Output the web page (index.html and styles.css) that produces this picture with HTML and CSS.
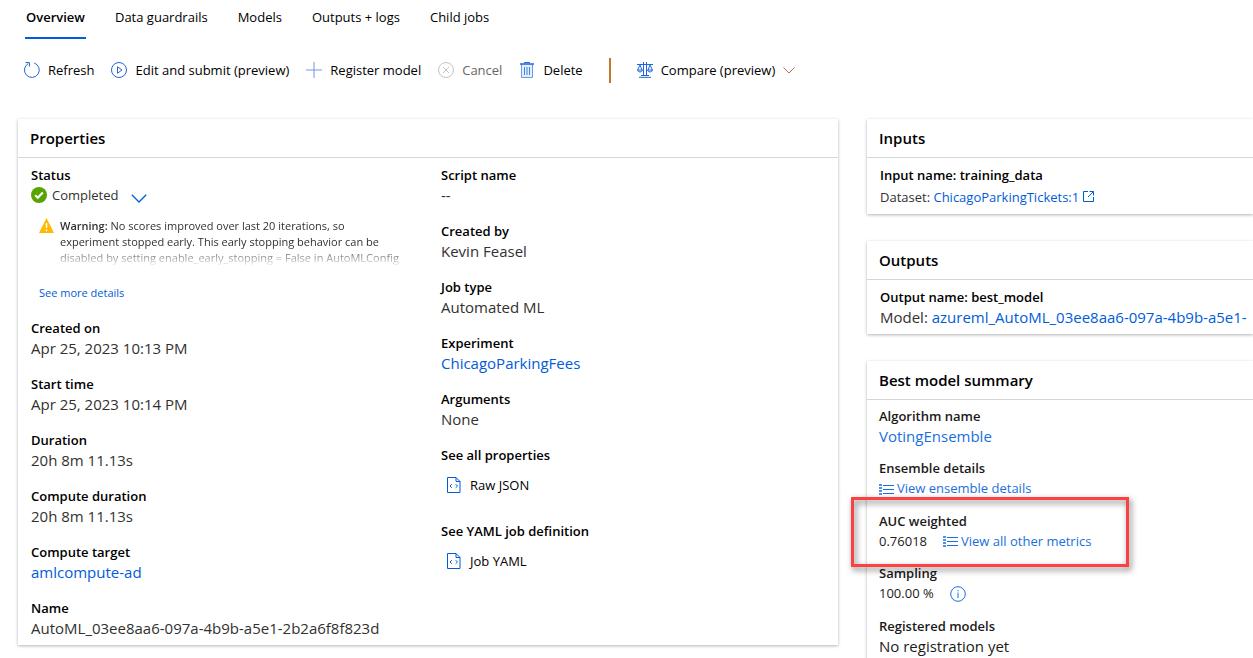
FILE: index.html
```html
<!DOCTYPE html>
<html lang="en">
<head>
<meta charset="utf-8">
<meta name="viewport" content="width=device-width, initial-scale=1">
<title>Automated ML job overview</title>
<link rel="stylesheet" href="styles.css">
</head>
<body>
<svg class="sprite" aria-hidden="true">
  <symbol id="i-list" viewBox="0 0 15 12">
    <path d="M0 2h3M0 5h3M0 8h3M0 11h3" stroke="currentColor" stroke-width="1.500" fill="none"/>
    <path d="M4 2.500h11M4 6.500h11M4 10.500h11" stroke="currentColor" fill="none"/>
  </symbol>
  <symbol id="i-code" viewBox="0 0 14 16">
    <path d="M.5.5h8.500l4 4v11H.5zM9 .5v4h4" fill="none" stroke="currentColor"/>
    <path d="M4.800 7.200 3 9l1.800 1.800M8.700 7.200 10.500 9l-1.800 1.800" fill="none" stroke="currentColor"/>
  </symbol>
</svg>
<nav class="tabs">
  <a class="tab active" href="#overview" aria-current="page">Overview</a>
  <a class="tab" href="#guardrails">Data guardrails</a>
  <a class="tab" href="#models">Models</a>
  <a class="tab" href="#outputs">Outputs + logs</a>
  <a class="tab" href="#children">Child jobs</a>
</nav>
<div class="toolbar">
  <button class="tool" type="button">
    <svg width="16" height="16" viewBox="0 0 16 16" fill="none" stroke="currentColor"><path d="M4.200 1.600A7.400 7.400 0 1 0 10.200 1M1.500.6h3.900v4"/></svg>Refresh</button>
  <button class="tool" type="button">
    <svg width="16" height="16" viewBox="0 0 16 16" fill="none" stroke="currentColor"><circle cx="8" cy="8" r="7.500"/><path d="M6.500 4.800v6.400L11 8z"/></svg>Edit and submit (preview)</button>
  <button class="tool" type="button">
    <svg class="soft" width="16" height="16" viewBox="0 0 16 16" fill="none" stroke="currentColor"><path d="M8 0v16M0 8h16"/></svg>Register model</button>
  <button class="tool" type="button" disabled>
    <svg width="16" height="16" viewBox="0 0 16 16" fill="none" stroke="currentColor"><circle cx="8" cy="8" r="7.500"/><path d="m5 5 6 6M11 5l-6 6"/></svg>Cancel</button>
  <button class="tool" type="button">
    <svg width="16" height="16" viewBox="0 0 16 16" fill="none" stroke="currentColor"><path d="M2.500 2v13.500h11V2" stroke="#6f97e8" fill="#e3effc"/><path d="M1 2h14" stroke-width="1.500"/><path d="M5.500 1.500v-1h5v1"/><path d="M5.500 5v8M8 5v8M10.500 5v8" stroke="#3f86e0"/></svg>Delete</button>
  <span class="divider"></span>
  <button class="tool" type="button">
    <svg width="16" height="16" viewBox="0 0 16 16" fill="none" stroke="currentColor"><path d="M0 2.500h16M6.500 0v14M9.500 0v14M2 15.300h12M4 13.500h8M3 3 .6 8M3 3l2 5M13 3l-2 5M13 3l2.400 5M.5 8h5q-.5 2-2.500 2T.5 8zM10.500 8h5q-.5 2-2.500 2t-2.500-2z"/></svg>Compare (preview)
    <svg class="caret" width="12" height="7" viewBox="0 0 12 7" fill="none" stroke="currentColor"><path d="m.5.5 5.500 5.500L11.500.5"/></svg></button>
</div>
<main class="layout">
  <section class="card">
    <h2>Properties</h2>
    <div class="card-body columns">
      <dl class="fields">
        <div class="field">
          <dt>Status</dt>
          <dd class="status">
            <svg width="16" height="16" viewBox="0 0 16 16"><circle cx="8" cy="8" r="8" fill="#57a300"/><path d="m4.200 8.200 2.600 2.600 5-5.300" fill="none" stroke="#fff" stroke-width="2"/></svg>
            <span>Completed</span>
            <button class="expand" type="button" aria-label="Toggle status details"><svg width="16" height="9" viewBox="0 0 16 9" fill="none" stroke="currentColor" stroke-width="1.300"><path d="m.8.8 7.200 7.200L15.200.8"/></svg></button>
          </dd>
          <dd class="notice">
            <svg width="15" height="15" viewBox="0 0 15 15"><path d="M7.500 0 15 15H0z" fill="#ffb900"/><path d="M7.500 5v5M7.500 11.500v1.700" stroke="#fff" stroke-width="1.500"/></svg>
            <p><strong>Warning:</strong> No scores improved over last 20 iterations, so<br>experiment stopped early. This early stopping behavior can be disabled by setting enable_early_stopping = False in AutoMLConfig</p>
          </dd>
          <dd class="more"><a href="#details">See more details</a></dd>
        </div>
        <div class="field"><dt>Created on</dt><dd>Apr 25, 2023 10:13 PM</dd></div>
        <div class="field"><dt>Start time</dt><dd>Apr 25, 2023 10:14 PM</dd></div>
        <div class="field"><dt>Duration</dt><dd>20h 8m 11.13s</dd></div>
        <div class="field"><dt>Compute duration</dt><dd>20h 8m 11.13s</dd></div>
        <div class="field"><dt>Compute target</dt><dd><a href="#compute">amlcompute-ad</a></dd></div>
        <div class="field"><dt>Name</dt><dd>AutoML_03ee8aa6-097a-4b9b-a5e1-2b2a6f8f823d</dd></div>
      </dl>
      <dl class="fields">
        <div class="field"><dt>Script name</dt><dd>--</dd></div>
        <div class="field"><dt>Created by</dt><dd>Kevin Feasel</dd></div>
        <div class="field"><dt>Job type</dt><dd>Automated ML</dd></div>
        <div class="field"><dt>Experiment</dt><dd><a href="#experiment">ChicagoParkingFees</a></dd></div>
        <div class="field"><dt>Arguments</dt><dd>None</dd></div>
        <div class="field"><dt>See all properties</dt><dd><button class="file" type="button"><svg width="14" height="16"><use href="#i-code"/></svg>Raw JSON</button></dd></div>
        <div class="field"><dt>See YAML job definition</dt><dd><button class="file" type="button"><svg width="14" height="16"><use href="#i-code"/></svg>Job YAML</button></dd></div>
      </dl>
    </div>
  </section>
  <div class="side">
    <section class="card">
      <h2>Inputs</h2>
      <dl class="card-body">
        <dt>Input name: training_data</dt>
        <dd class="small dataset">Dataset: <a href="#dataset">ChicagoParkingTickets:1 <svg width="11" height="11" viewBox="0 0 11 11" fill="none" stroke="currentColor"><path d="M5 .5H.5v10h10V6M6.500.5h4v4M10.500.5 5 6"/></svg></a></dd>
      </dl>
    </section>
    <section class="card">
      <h2>Outputs</h2>
      <dl class="card-body">
        <dt>Output name: best_model</dt>
        <dd class="clip">Model: <a href="#model">azureml_AutoML_03ee8aa6-097a-4b9b-a5e1-</a></dd>
      </dl>
    </section>
    <section class="card">
      <h2>Best model summary</h2>
      <dl class="card-body summary">
        <div class="field"><dt>Algorithm name</dt><dd><a href="#ensemble">VotingEnsemble</a></dd></div>
        <div class="field"><dt>Ensemble details</dt><dd class="small inline tall"><a class="list-link" href="#ensemble-details"><svg width="15" height="12"><use href="#i-list"/></svg>View ensemble details</a></dd></div>
        <div class="field highlighted"><dt>AUC weighted</dt><dd class="small inline">0.76018 <a class="list-link" href="#metrics"><svg width="15" height="12"><use href="#i-list"/></svg>View all other metrics</a></dd></div>
        <div class="field"><dt>Sampling</dt><dd class="small inline tall">100.00 % <button class="info" type="button" aria-label="Sampling information"><svg width="16" height="16" viewBox="0 0 16 16" fill="none" stroke="currentColor"><circle cx="8" cy="8" r="7.300"/><path d="M8 6.500V12M8 4v1.300"/></svg></button></dd></div>
        <div class="field"><dt>Registered models</dt><dd>No registration yet</dd></div>
      </dl>
    </section>
  </div>
</main>
</body>
</html>
```
FILE: styles.css
```css
*, *::after { box-sizing: border-box; }
body {
  margin: 0;
  background: #fff;
  color: #000;
  font: 13px/20px "Open Sans", "Noto Sans", sans-serif;
}
button {
  font: inherit;
  color: inherit;
  background: none;
  border: 0;
  padding: 0;
  cursor: pointer;
}
a { color: #015cda; text-decoration: none; }
h2, dl, dd, p { margin: 0; }
svg { flex: none; }
.sprite { display: none; }

.tabs { display: flex; gap: 28px; padding-left: 25px; }
.tab { color: #000; padding: 7px 1px 10px; border-bottom: 2px solid transparent; }
.tab.active { font-weight: 600; border-color: #015cda; }

.toolbar { display: flex; align-items: center; gap: 17px; height: 32px; margin-top: 15px; padding-left: 24px; }
.tool { display: flex; align-items: center; gap: 8px; white-space: nowrap; }
.tool svg { color: #2264d9; }
.tool .soft { color: #7b93de; }
.tool:disabled { color: #666; }
.tool:disabled svg { color: #c3c3c3; }
.tool .caret { color: #b4705c; }
.divider { width: 2px; height: 25px; margin: 0 9px; background: #c07a2c; }

.layout {
  display: grid;
  grid-template-columns: minmax(0, 820fr) minmax(0, 386fr);
  gap: 29px;
  align-items: start;
  margin-top: 33px;
  padding-left: 18px;
}
.side { display: grid; gap: 27px; }
.card { min-width: 0; background: #fff; box-shadow: 0 1px 3px rgba(0, 0, 0, .3); }
.card h2 { padding: 9px 12px; border-bottom: 1px solid #d6d6d6; font-size: 15px; line-height: 20px; font-weight: 600; }
.card-body { padding: 7px 13px; }
.columns { display: grid; grid-template-columns: 1fr 1fr; gap: 26px; }
.fields { display: grid; gap: 16px; align-content: start; min-width: 0; }
dt { font-weight: 600; }
dd { font-size: 15px; color: #323130; }
dd.small { font-size: 13px; }
.dataset { padding-top: 2px; }
.clip { white-space: nowrap; overflow: hidden; margin-right: -13px; }

.status { display: flex; align-items: center; gap: 5px; font-size: 13px; }
.expand { display: flex; margin: 6px 0 0 8px; color: #015cda; }
.notice {
  display: flex;
  gap: 6px;
  padding: 13px 0 0 8px;
  font-size: 11px;
  line-height: 16px;
  -webkit-mask-image: linear-gradient(#000 42px, transparent 62px);
  mask-image: linear-gradient(#000 42px, transparent 62px);
}
.notice strong { font-weight: 600; }
.more { padding: 18px 0 0 8px; font-size: 11px; line-height: 18px; }
.file { display: flex; align-items: center; gap: 9px; height: 40px; padding-left: 6px; font-size: 13px; color: #000; }
.file svg { color: #015cda; }

.summary { display: grid; gap: 12px; padding: 6px 12px 24px; }
.summary dt, .summary dd { color: #1b1a19; }
.summary a, .info { color: #1a6fe0; }
.inline { display: flex; align-items: center; gap: 16px; }
.tall { line-height: 21px; }
.list-link { display: flex; align-items: center; gap: 3px; }
.highlighted { position: relative; }
.highlighted::after {
  content: "";
  position: absolute;
  top: -14px;
  left: -28px;
  width: 278px;
  height: 70px;
  border: 3px solid #fb4141;
  filter: drop-shadow(2px 3px 3px rgba(0, 0, 0, .55));
  pointer-events: none;
}
.info { display: flex; }
```
